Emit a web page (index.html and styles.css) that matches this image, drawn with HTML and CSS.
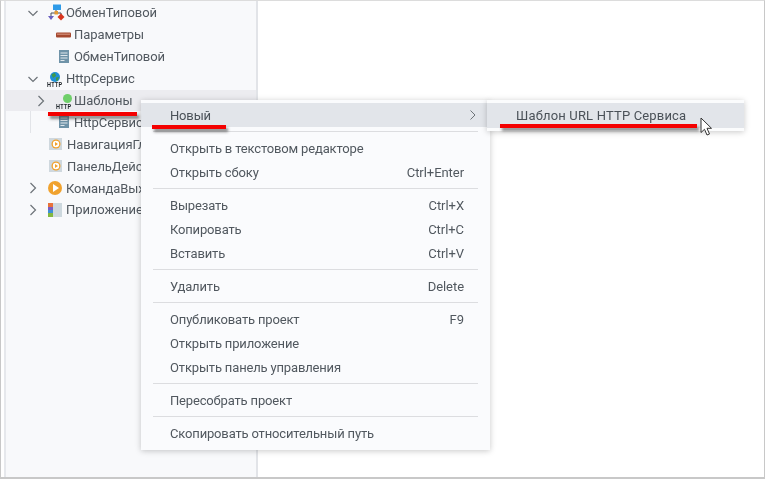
FILE: index.html
```html
<!DOCTYPE html>
<html lang="ru">
<head>
<meta charset="utf-8">
<title>Контекстное меню</title>
<link rel="stylesheet" href="styles.css">
</head>
<body>
<div class="frame">
  <aside class="tree">
    <div class="row lvl1"><svg class="chev" viewBox="0 0 12 12"><path d="M1.500 4 6 8.500 10.500 4"/></svg>
      <svg class="ico" viewBox="0 0 18 18"><rect x="6" y="0.500" width="8" height="5.500" fill="#2f9be8"/><path d="M9 6V9H4v3M9 9h5v2" fill="none" stroke="#4b4f55" stroke-width="1"/><rect x="7.500" y="7" width="3.500" height="3.500" fill="#e39a35"/><path d="M1 12h6L4 16z" fill="#6a5fc0"/><path d="M14 9.500 17.500 13 14 16.500 10.500 13z" fill="#d9361f"/></svg>
      <span>ОбменТиповой</span></div>
    <div class="row lvl2"><svg class="ico" viewBox="0 0 18 18"><rect x="0" y="6.500" width="15" height="5" rx="1" fill="#a5482f"/><rect x="1" y="7.500" width="13" height="1.500" fill="#c9806a"/></svg><span>Параметры</span></div>
    <div class="row lvl2"><svg class="ico" viewBox="0 0 18 18"><rect x="3" y="2" width="10" height="13" fill="#6f93a8"/><path d="M4.500 5h7M4.500 7.500h7M4.500 10h7M4.500 12.500h4" stroke="#dfe7ec"/></svg><span>ОбменТиповой</span></div>
    <div class="row lvl1"><svg class="chev" viewBox="0 0 12 12"><path d="M1.500 4 6 8.500 10.500 4"/></svg>
      <span class="http"><svg class="globe" viewBox="0 0 10 10"><circle cx="5" cy="5" r="5" fill="#1f8fd6"/><path d="M1.500 2.500 5 .8 6 4 3 6zM6 5.500 9 5 7.500 9 6 8.500z" fill="#3f9a4a"/></svg><b>HTTP</b></span>
      <span>HttpСервис</span></div>
    <div class="row lvl2 hovered"><svg class="chev out" viewBox="0 0 12 12"><path d="M3.500 1 8.500 6 3.500 11"/></svg>
      <span class="http tight"><i class="dot"></i><b>HTTP</b></span>
      <span>Шаблоны</span></div>
    <div class="row lvl2 guide"><svg class="ico" viewBox="0 0 18 18"><rect x="3" y="2" width="10" height="13" fill="#6f93a8"/><path d="M4.500 5h7M4.500 7.500h7M4.500 10h7M4.500 12.500h4" stroke="#dfe7ec"/></svg><span>HttpСервис</span></div>
    <div class="row lvl1b"><svg class="ico" viewBox="0 0 18 18"><rect x="1" y="3" width="13" height="12" fill="#cfd8de"/><circle cx="8" cy="9" r="4.500" fill="#f0a22e"/><circle cx="8" cy="9" r="3.200" fill="#fff"/><path d="M7 7 10 9 7 11z" fill="#f0a22e"/></svg><span>НавигацияГлавная</span></div>
    <div class="row lvl1b"><svg class="ico" viewBox="0 0 18 18"><rect x="1" y="3" width="13" height="12" fill="#cfd8de"/><circle cx="8" cy="9" r="4.500" fill="#f0a22e"/><circle cx="8" cy="9" r="3.200" fill="#fff"/><path d="M7 7 10 9 7 11z" fill="#f0a22e"/></svg><span>ПанельДействий</span></div>
    <div class="row lvl1"><svg class="chev" viewBox="0 0 12 12"><path d="M3.500 1 8.500 6 3.500 11"/></svg>
      <svg class="ico" viewBox="0 0 18 18"><circle cx="8" cy="9" r="7" fill="#f0a22e"/><path d="M6 5 12 9 6 13z" fill="#fff"/></svg><span>КомандаВыход</span></div>
    <div class="row lvl1"><svg class="chev" viewBox="0 0 12 12"><path d="M3.500 1 8.500 6 3.500 11"/></svg>
      <svg class="ico" viewBox="0 0 18 18"><rect x="1" y="2" width="14" height="14" fill="#cdd8de"/><rect x="1" y="2" width="5" height="4" fill="#e8713a"/><rect x="1" y="6" width="5" height="3" fill="#7a5cc0"/><rect x="1" y="9" width="5" height="3" fill="#3f8fd6"/><rect x="1" y="12" width="5" height="4" fill="#83b83f"/></svg><span>Приложение</span></div>
  </aside>

  <nav class="menu">
    <div class="item active"><span>Новый</span><svg class="more" viewBox="0 0 8 12"><path d="M1.500 1.500 6 6 1.500 10.500"/></svg></div>
    <hr>
    <div class="item"><span>Открыть в текстовом редакторе</span></div>
    <div class="item"><span>Открыть сбоку</span><kbd>Ctrl+Enter</kbd></div>
    <hr>
    <div class="item"><span>Вырезать</span><kbd>Ctrl+X</kbd></div>
    <div class="item"><span>Копировать</span><kbd>Ctrl+C</kbd></div>
    <div class="item"><span>Вставить</span><kbd>Ctrl+V</kbd></div>
    <hr>
    <div class="item"><span>Удалить</span><kbd>Delete</kbd></div>
    <hr>
    <div class="item"><span>Опубликовать проект</span><kbd>F9</kbd></div>
    <div class="item"><span>Открыть приложение</span></div>
    <div class="item"><span>Открыть панель управления</span></div>
    <hr>
    <div class="item"><span>Пересобрать проект</span></div>
    <hr>
    <div class="item"><span>Скопировать относительный путь</span></div>
  </nav>

  <nav class="menu submenu">
    <div class="item active"><span>Шаблон URL HTTP Сервиса</span></div>
  </nav>

  <i class="mark mark-a"></i>
  <i class="mark mark-b"></i>
  <i class="mark mark-c"></i>

  <svg class="cursor" viewBox="0 0 14 20"><path d="M1 1V15.500L4.500 12.300 7 18 9.500 17 7 11.300H11.500z" fill="#fff" stroke="#333" stroke-width="1"/></svg>
</div>
</body>
</html>
```
FILE: styles.css
```css
* { box-sizing: border-box; }
html, body { margin: 0; height: 100%; background: #fff; }
body { font-family: Roboto, "Liberation Sans", sans-serif; font-size: 13px; color: #51585f; }
.frame { position: relative; width: 765px; height: 479px; padding-left: 3px; border: 1px solid #c8c8c8; border-top-color: #dcdcdc; border-bottom-width: 2px; overflow: hidden; background: #fff; filter: blur(.35px); }
.tree { width: 254px; height: 100%; padding-top: 1px; background: #f8f9fb; border-left: 2px solid #e6e8ec; border-right: 2px solid #e2e4e8; letter-spacing: -.08px; }
.row { display: flex; align-items: center; height: 21.900px; white-space: nowrap; position: relative; margin-left: -5px; }
.lvl1 { padding-left: 26px; }
.lvl2 { padding-left: 55px; }
.lvl1b { padding-left: 47px; }
.hovered { background: #ececf0; margin-left: 0; padding-left: 50px; }
.guide::before { content: ""; position: absolute; left: 29px; top: 0; bottom: 0; width: 1px; background: #e2e4e8; }
.chev { width: 12px; height: 12px; margin-right: 8px; flex: none; fill: none; stroke: #6d7378; stroke-width: 1.200; }
.chev.out { position: absolute; left: 29px; margin: 0; }
.ico { width: 18px; height: 18px; flex: none; }
.lvl1 .ico, .lvl1b .ico { margin-right: 1px; }
.http { position: relative; width: 19px; height: 18px; flex: none; }
.tight { width: 18px; }
.http b { position: absolute; left: 0; bottom: 0; font: 700 7px/6px "Liberation Sans", sans-serif; letter-spacing: .4px; color: #20262b; transform: scaleX(.78); transform-origin: left center; }
.globe { position: absolute; left: 3px; top: 2px; width: 10px; height: 10px; }
.dot { position: absolute; left: 7px; top: 2px; width: 9px; height: 9px; border-radius: 50%; background: #6fcf6a; }
.menu { position: absolute; left: 140px; top: 99px; width: 349px; padding: 3px 0 5px; background: #fafbfd; box-shadow: 0 1px 6px rgba(0,0,0,.22); letter-spacing: -.16px; }
.submenu { left: 486px; width: 257px; padding: 3px 0; background: #fbfcfd; letter-spacing: .17px; }
.submenu .item { height: 25px; padding-bottom: 1px; }
.item { display: flex; align-items: center; justify-content: space-between; height: 24px; padding: 0 26px 0 29px; white-space: nowrap; }
.active { background: #e2e5ea; }
.active span { color: #4a5158; }
kbd { font: inherit; letter-spacing: -.05px; }
hr { margin: 4px 12px; height: 1px; border: 0; background: #dcdde0; }
.more { width: 8px; height: 12px; fill: none; stroke: #6d7378; stroke-width: 1; margin-right: -13px; }
.mark { position: absolute; height: 4px; background: #f40000; box-shadow: 2px 3px 3px rgba(40,40,40,.55); }
.mark-a { left: 47px; top: 111px; width: 89px; }
.mark-b { left: 151px; top: 124px; width: 74px; }
.mark-c { left: 499px; top: 123px; width: 197px; }
.cursor { position: absolute; left: 699px; top: 116px; width: 14px; height: 20px; }
```
